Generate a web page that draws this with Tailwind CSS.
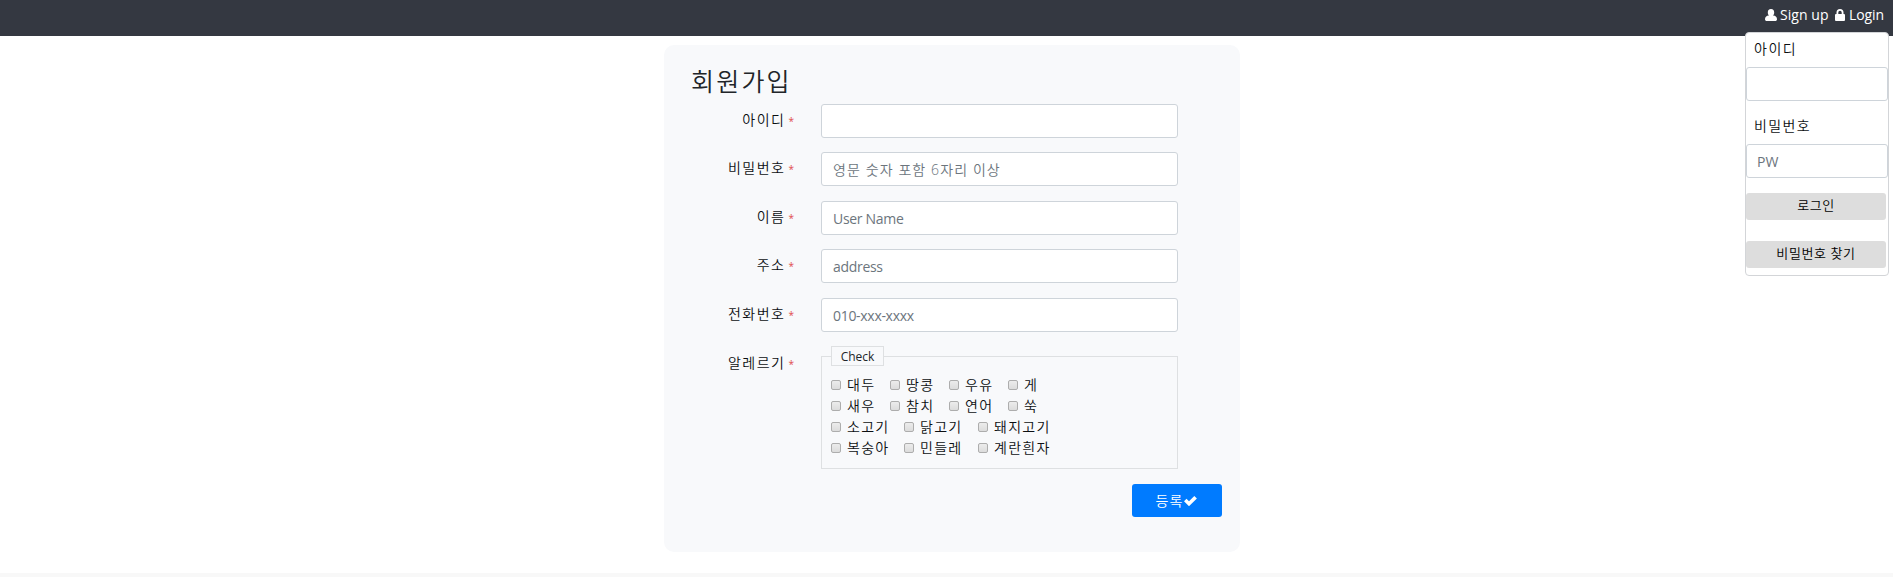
<!DOCTYPE html>
<html lang="ko">
<head>
<meta charset="utf-8">
<title>회원가입</title>
<script src="https://cdn.jsdelivr.net/npm/@tailwindcss/browser@4"></script>
</head>
<body class="relative h-[577px] overflow-hidden bg-white font-['Open_Sans','Noto_Sans_CJK_KR',sans-serif] text-[#212529]">
<nav class="flex h-9 items-start justify-end bg-[#343841] pt-[5px] pr-[9px] text-[14px] leading-5 text-white">
  <a class="flex items-center"><svg class="mr-[3px] h-3 w-3" viewBox="0 0 12 12" fill="currentColor"><path d="M6 0C8.200 0 9.200 1.500 9.200 3.400c0 1.300-.5 2.300-1.200 3C10.800 6.600 12 8 12 10.200 12 11.400 11.300 12 10.200 12H1.800C.7 12 0 11.400 0 10.200 0 8 1.200 6.600 4 6.400c-.7-.7-1.200-1.700-1.200-3C2.800 1.500 3.800 0 6 0z"/></svg><span class="w-[49px] whitespace-nowrap tracking-[0.05px]">Sign up</span></a>
  <a class="ml-[6px] flex items-center"><svg class="mr-1 h-3 w-[10px]" viewBox="0 0 10 12" fill="currentColor"><path fill-rule="evenodd" d="M1.500 5V3.500a3.500 3.500 0 0 1 7 0V5H9q1 0 1 1v5q0 1-1 1H1q-1 0-1-1V6q0-1 1-1zM3.300 5h3.400V3.500a1.700 1.700 0 0 0-3.400 0z"/></svg><span class="w-[35px] whitespace-nowrap tracking-[-0.1px]">Login</span></a>
</nav>

<section class="absolute top-8 left-[1745px] flex h-[244px] w-[144px] flex-col rounded border border-[#d3d5d8] bg-white">
  <label class="mt-[6px] ml-2 h-5 text-[14px] leading-5 font-[350] tracking-[1.5px] text-[#0c0f12]">아이디</label>
  <input class="mt-2 h-[34px] w-[142px] shrink-0 rounded-[3px] border border-[#ced4da] px-[11px]">
  <label class="mt-[15px] ml-2 h-5 text-[14px] leading-5 font-[350] tracking-[1.4px] text-[#0c0f12]">비밀번호</label>
  <input class="mt-2 h-[34px] w-[142px] shrink-0 rounded-[3px] border border-[#ced4da] px-[10px] pt-px text-[14px] placeholder:text-[#6c757d]" placeholder="PW">
  <button class="mt-[15px] h-[27px] w-[140px] shrink-0 rounded-[3px] bg-[#ddd] pb-[4px] text-[13px] leading-4 font-[350] tracking-[0.6px] text-black">로그인</button>
  <button class="mt-[21px] h-[27px] w-[140px] shrink-0 rounded-[3px] bg-[#ddd] pb-[4px] text-[13px] leading-4 font-[350] tracking-[0.6px] text-black">비밀번호 찾기</button>
</section>

<main class="mt-[9px] ml-[664px] h-[507px] w-[576px] rounded-[10px] bg-[#f8f9fb] pt-5 pr-[18px] pl-7">
  <h1 class="-ml-px h-[39px] text-[25px] leading-8 font-[350] tracking-[2.2px]">회원가입</h1>
  <form>
    <div class="flex h-[48px]"><label class="mr-[27px] w-[102px] pt-[6px] text-right text-[14px] leading-5 font-[350] tracking-[1.5px] text-[#0c0f12]">아이디<span class="ml-[3px] text-[10px] font-normal tracking-normal text-[#e04b4b]">*</span></label><input class="h-[34px] w-[357px] rounded-[3px] border border-[#ced4da] bg-white px-[11px]"></div>
    <div class="flex h-[49px]"><label class="mr-[27px] w-[102px] pt-[6px] text-right text-[14px] leading-5 font-[350] tracking-[1.5px] text-[#0c0f12]">비밀번호<span class="ml-[3px] text-[10px] font-normal tracking-normal text-[#e04b4b]">*</span></label><input class="h-[34px] w-[357px] rounded-[3px] border border-[#ced4da] bg-white px-[11px] pt-px text-[14px] font-[350] tracking-[1.1px] placeholder:text-[#6c757d]" placeholder="영문 숫자 포함 6자리 이상"></div>
    <div class="flex h-[48px]"><label class="mr-[27px] w-[102px] pt-[6px] text-right text-[14px] leading-5 font-[350] tracking-[1.5px] text-[#0c0f12]">이름<span class="ml-[3px] text-[10px] font-normal tracking-normal text-[#e04b4b]">*</span></label><input class="h-[34px] w-[357px] rounded-[3px] border border-[#ced4da] bg-white px-[11px] pt-px text-[14px] tracking-[-0.3px] placeholder:text-[#6c757d]" placeholder="User Name"></div>
    <div class="flex h-[49px]"><label class="mr-[27px] w-[102px] pt-[6px] text-right text-[14px] leading-5 font-[350] tracking-[1.5px] text-[#0c0f12]">주소<span class="ml-[3px] text-[10px] font-normal tracking-normal text-[#e04b4b]">*</span></label><input class="h-[34px] w-[357px] rounded-[3px] border border-[#ced4da] bg-white px-[11px] pt-px text-[14px] tracking-[-0.3px] placeholder:text-[#6c757d]" placeholder="address"></div>
    <div class="flex h-[48px]"><label class="mr-[27px] w-[102px] pt-[6px] text-right text-[14px] leading-5 font-[350] tracking-[1.5px] text-[#0c0f12]">전화번호<span class="ml-[3px] text-[10px] font-normal tracking-normal text-[#e04b4b]">*</span></label><input class="h-[34px] w-[357px] rounded-[3px] border border-[#ced4da] bg-white px-[11px] pt-px text-[14px] tracking-[-0.3px] placeholder:text-[#6c757d]" placeholder="010-xxx-xxxx"></div>
    <div class="flex h-[123px]"><label class="mr-[27px] w-[102px] pt-[7px] text-right text-[14px] leading-5 font-[350] tracking-[1.5px] text-[#0c0f12]">알레르기<span class="ml-[3px] text-[10px] font-normal tracking-normal text-[#e04b4b]">*</span></label>
      <fieldset class="h-[123px] w-[357px] border border-[#dee0e2] pl-[9px]">
        <legend class="flex h-5 w-[53px] items-center justify-center border border-[#dee0e2] bg-[#f8f9fb] pt-px text-[12px] leading-4">Check</legend>
        <div class="mt-2 text-[14px] leading-[21px] font-[350] tracking-[1.3px] text-[#0c0f12]">
          <div class="flex h-[21px]"><label class="flex w-[59px] items-center gap-[6px] whitespace-nowrap"><i class="size-[10px] rounded-[2px] border border-[#adadad] bg-linear-to-b from-[#ececec] to-[#dcdcdc]"></i>대두</label><label class="flex w-[59px] items-center gap-[6px] whitespace-nowrap"><i class="size-[10px] rounded-[2px] border border-[#adadad] bg-linear-to-b from-[#ececec] to-[#dcdcdc]"></i>땅콩</label><label class="flex w-[59px] items-center gap-[6px] whitespace-nowrap"><i class="size-[10px] rounded-[2px] border border-[#adadad] bg-linear-to-b from-[#ececec] to-[#dcdcdc]"></i>우유</label><label class="flex items-center gap-[6px] whitespace-nowrap"><i class="size-[10px] rounded-[2px] border border-[#adadad] bg-linear-to-b from-[#ececec] to-[#dcdcdc]"></i>게</label></div>
          <div class="flex h-[21px]"><label class="flex w-[59px] items-center gap-[6px] whitespace-nowrap"><i class="size-[10px] rounded-[2px] border border-[#adadad] bg-linear-to-b from-[#ececec] to-[#dcdcdc]"></i>새우</label><label class="flex w-[59px] items-center gap-[6px] whitespace-nowrap"><i class="size-[10px] rounded-[2px] border border-[#adadad] bg-linear-to-b from-[#ececec] to-[#dcdcdc]"></i>참치</label><label class="flex w-[59px] items-center gap-[6px] whitespace-nowrap"><i class="size-[10px] rounded-[2px] border border-[#adadad] bg-linear-to-b from-[#ececec] to-[#dcdcdc]"></i>연어</label><label class="flex items-center gap-[6px] whitespace-nowrap"><i class="size-[10px] rounded-[2px] border border-[#adadad] bg-linear-to-b from-[#ececec] to-[#dcdcdc]"></i>쑥</label></div>
          <div class="flex h-[21px]"><label class="flex w-[73px] items-center gap-[6px] whitespace-nowrap"><i class="size-[10px] rounded-[2px] border border-[#adadad] bg-linear-to-b from-[#ececec] to-[#dcdcdc]"></i>소고기</label><label class="flex w-[74px] items-center gap-[6px] whitespace-nowrap"><i class="size-[10px] rounded-[2px] border border-[#adadad] bg-linear-to-b from-[#ececec] to-[#dcdcdc]"></i>닭고기</label><label class="flex items-center gap-[6px] whitespace-nowrap"><i class="size-[10px] rounded-[2px] border border-[#adadad] bg-linear-to-b from-[#ececec] to-[#dcdcdc]"></i>돼지고기</label></div>
          <div class="flex h-[21px]"><label class="flex w-[73px] items-center gap-[6px] whitespace-nowrap"><i class="size-[10px] rounded-[2px] border border-[#adadad] bg-linear-to-b from-[#ececec] to-[#dcdcdc]"></i>복숭아</label><label class="flex w-[74px] items-center gap-[6px] whitespace-nowrap"><i class="size-[10px] rounded-[2px] border border-[#adadad] bg-linear-to-b from-[#ececec] to-[#dcdcdc]"></i>민들레</label><label class="flex items-center gap-[6px] whitespace-nowrap"><i class="size-[10px] rounded-[2px] border border-[#adadad] bg-linear-to-b from-[#ececec] to-[#dcdcdc]"></i>계란흰자</label></div>
        </div>
      </fieldset>
    </div>
    <button type="button" class="mt-[15px] ml-auto flex h-[33px] w-[90px] items-center justify-center rounded-[3px] bg-[#007bff] pr-[2px] text-[14px] leading-5 font-[350] tracking-[1.2px] text-white">등록<svg class="mt-px h-[10px] w-[13px]" viewBox="0 0 13 10" fill="currentColor"><path d="M0 5.300 2.500 2.800 5 5.200 10.300 0 12.900 2.500 5 10.200z"/></svg></button>
  </form>
</main>
<footer class="mt-[21px] h-1 bg-[#f8f8f8]"></footer>
</body>
</html>
